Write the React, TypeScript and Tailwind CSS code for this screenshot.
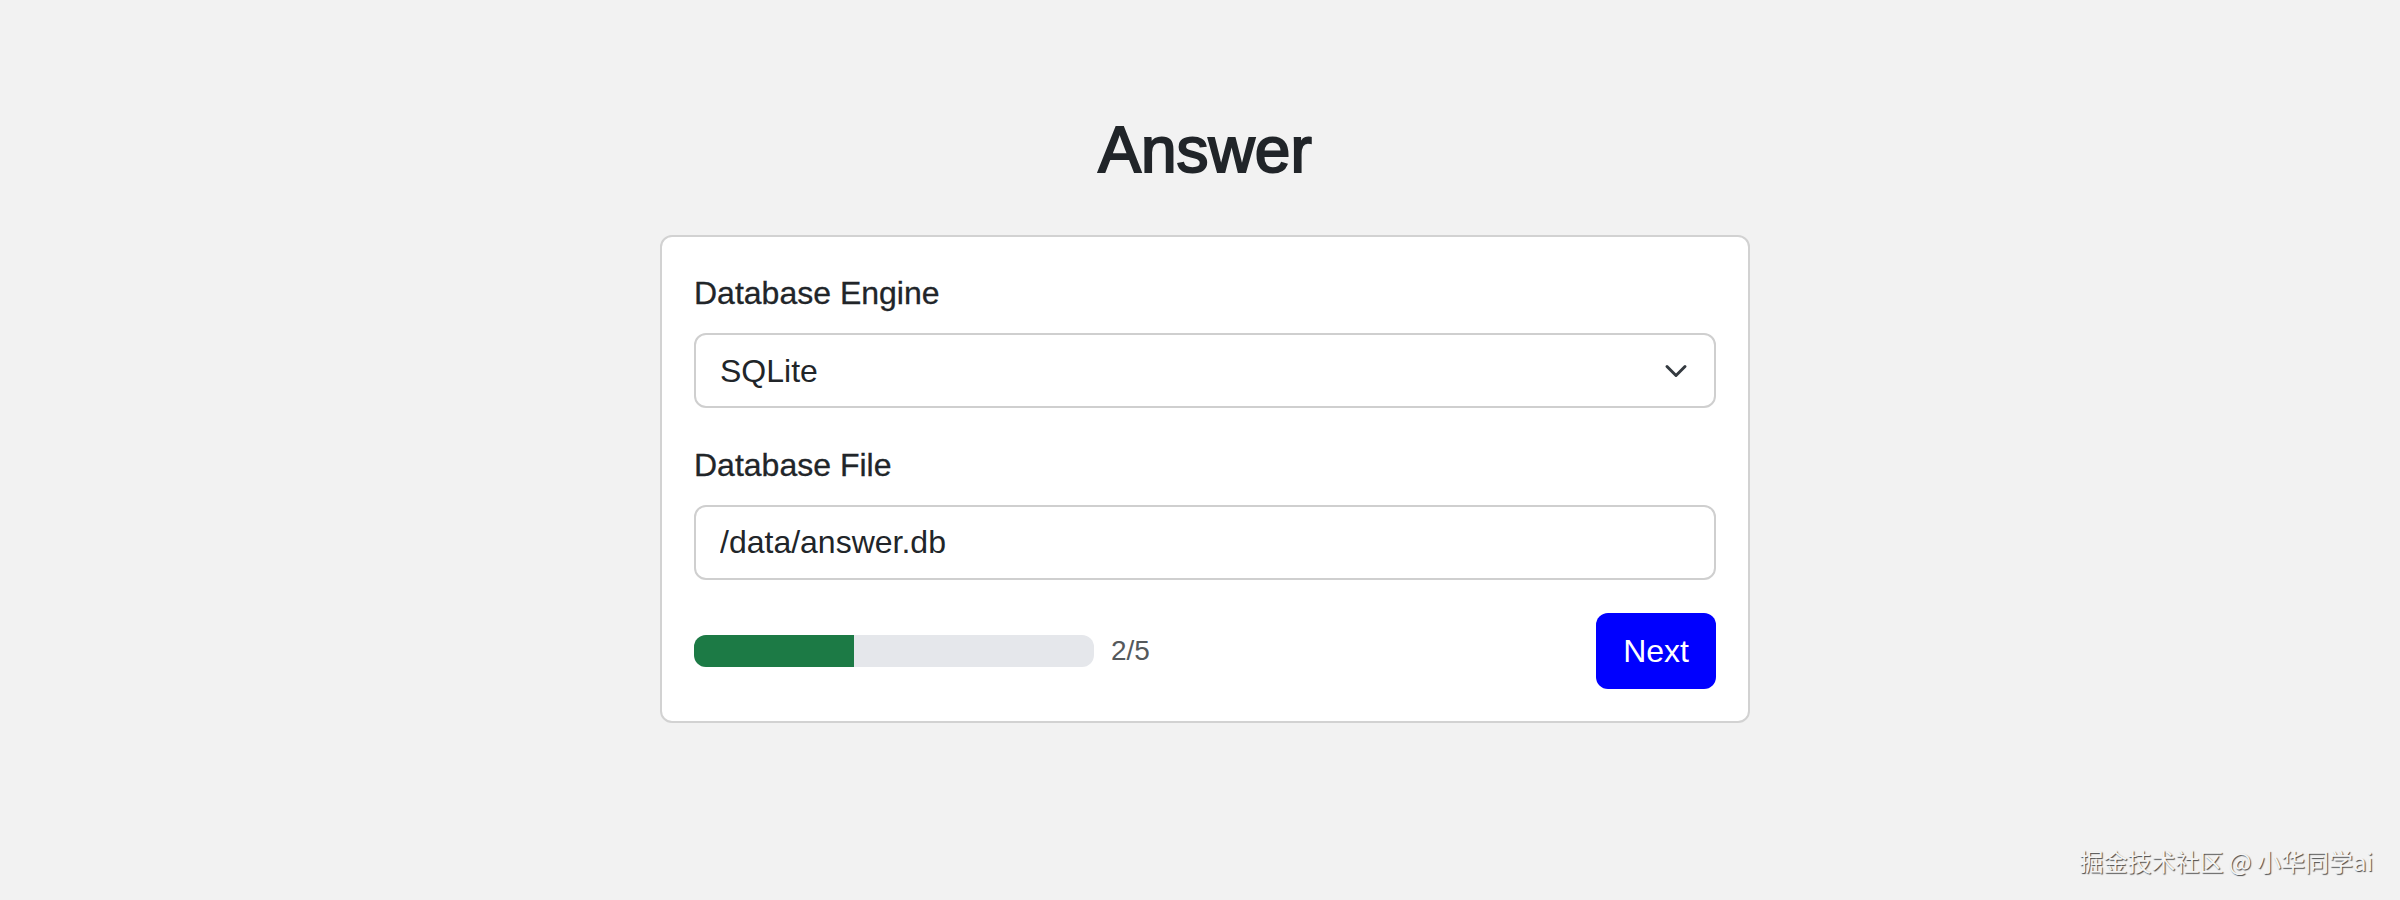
import React from 'react';

const font = { fontFamily: '"Liberation Sans", Arial, sans-serif' };

function Chevron() {
  return (
    <svg width="24" height="24" viewBox="0 0 16 16" fill="none" className="shrink-0">
      <path d="M2 5l6 6 6-6" stroke="#343a40" strokeWidth="2" strokeLinecap="round" strokeLinejoin="round" />
    </svg>
  );
}

export default function App() {
  const step = 2;
  const total = 5;

  return (
    <div
      className="relative min-h-screen bg-[#f2f2f2] text-[#212529] font-['Liberation_Sans',Arial,sans-serif]"
      style={font}
    >
      <div className="flex flex-col items-center pt-[112px] pl-[10px]">
        {/* Heading */}
        <h1 className="text-[64px] leading-[77px] font-medium mb-[46px] [-webkit-text-stroke:2px_#212529]">
          Answer
        </h1>

        {/* Card */}
        <div className="w-[1090px] bg-white border-2 border-[#d2d2d2] rounded-[12px] p-8">
          {/* Engine */}
          <div className="mb-[33px]">
            <label className="block text-[32px] leading-[48px] mb-4 [-webkit-text-stroke:0.3px_#212529]">Database Engine</label>
            <div className="h-[75px] flex items-center justify-between pl-6 pr-[26px] border-2 border-[#cfcfcf] rounded-[12px] text-[32px]">
              <span>SQLite</span>
              <Chevron />
            </div>
          </div>

          {/* File */}
          <div className="mb-[33px]">
            <label className="block text-[32px] leading-[48px] mb-4 [-webkit-text-stroke:0.3px_#212529]">Database File</label>
            <input
              readOnly
              value="/data/answer.db"
              className="w-full h-[75px] px-6 border-2 border-[#cfcfcf] rounded-[12px] text-[32px] text-[#212529] outline-none bg-white"
            />
          </div>

          {/* Footer */}
          <div className="flex items-center justify-between">
            <div className="flex items-center gap-[17px]">
              <div className="w-[400px] h-8 rounded-[12px] bg-[#e5e7eb] overflow-hidden">
                <div className="h-full bg-[#1c7a45]" style={{ width: `${(step / total) * 100}%` }} />
              </div>
              <span className="text-[28px] text-[#55595c]">
                {step}/{total}
              </span>
            </div>
            <button className="h-[76px] px-[27px] rounded-[12px] bg-[#0000ff] text-white text-[32px]">
              Next
            </button>
          </div>
        </div>
      </div>

      {/* Watermark */}
      <div className="absolute right-[27px] bottom-[27px] text-[24px] leading-[24px] text-[#f4f4f4] font-['Noto_Sans_CJK_SC',sans-serif] [text-shadow:1px_1px_1px_rgba(0,0,0,0.7)]">
        掘金技术社区 @ 小华同学ai
      </div>
    </div>
  );
}
